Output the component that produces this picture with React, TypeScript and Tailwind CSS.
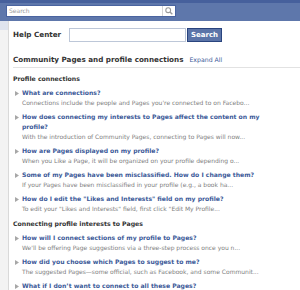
const sections = [
  {
    title: "Profile connections",
    items: [
      {
        q: ["What are connections?"],
        a: "Connections include the people and Pages you're connected to on Facebo...",
      },
      {
        q: ["How does connecting my interests to Pages affect the content on my", "profile?"],
        a: "With the introduction of Community Pages, connecting to Pages will now...",
      },
      {
        q: ["How are Pages displayed on my profile?"],
        a: "When you Like a Page, it will be organized on your profile depending o...",
      },
      {
        q: ["Some of my Pages have been misclassified. How do I change them?"],
        a: "If your Pages have been misclassified in your profile (e.g., a book ha...",
      },
      {
        q: ["How do I edit the \"Likes and Interests\" field on my profile?"],
        a: "To edit your \"Likes and Interests\" field, first click \"Edit My Profile...",
      },
    ],
  },
  {
    title: "Connecting profile interests to Pages",
    items: [
      {
        q: ["How will I connect sections of my profile to Pages?"],
        a: "We'll be offering Page suggestions via a three-step process once you n...",
      },
      {
        q: ["How did you choose which Pages to suggest to me?"],
        a: "The suggested Pages\u2014some official, such as Facebook, and some Communit...",
      },
      {
        q: ["What if I don\u2019t want to connect to all these Pages?"],
        a: "",
      },
    ],
  },
];

function Arrow() {
  return (
    <svg width="4" height="5" viewBox="0 0 4 5" className="mt-[2.5px] shrink-0">
      <path d="M0 0 L4 2.5 L0 5 Z" fill="#a7a7a7" />
    </svg>
  );
}

export default function App() {
  return (
    <div className="w-[300px] h-[290px] overflow-hidden bg-white font-['DejaVu_Sans',sans-serif]">
      {/* top bar */}
      <div className="h-[21px] bg-[#5e77ab] border-t-[3px] border-[#46609c] pt-[2px] pl-[6px]">
        <div className="w-[170px] h-[12px] bg-white border border-[#4a64a0] flex items-center">
          <span className="flex-1 pl-[2px] text-[6px] leading-none text-[#9a9a9a]">Search</span>
          <div className="w-px h-full bg-[#d5d5d5]" />
          <svg width="10" height="10" viewBox="0 0 10 10" className="mx-[1px]">
            <circle cx="4.2" cy="4.2" r="2.4" fill="none" stroke="#9a9a9a" strokeWidth="1.1" />
            <path d="M6 6 L8.3 8.3" stroke="#9a9a9a" strokeWidth="1.4" />
          </svg>
        </div>
      </div>

      <div className="flex h-full">
        {/* left strip */}
        <div className="w-[9px] shrink-0 bg-[#f3f3f3] border-r border-[#d9d9d9]">
          <div className="h-[9px] bg-[#dfe4ee]" />
        </div>

        <div className="flex-1 pl-[4px]">
          {/* help center search */}
          <div className="flex items-center pt-[7px]">
            <span className="w-[56px] text-[7.2px] leading-none font-bold text-[#333333] whitespace-nowrap">
              Help Center
            </span>
            <div className="w-[117px] h-[14px] border border-[#bdc7d8] bg-white" />
            <button className="ml-[1px] h-[14px] px-[3px] bg-[#5b74a8] border border-[#29447e] text-white text-[7px] font-bold leading-none">
              Search
            </button>
          </div>

          {/* page heading */}
          <div className="mt-[12px] flex items-baseline gap-[6px] h-[14px] border-b border-[#e2e2e2]">
            <span className="text-[7.2px] leading-[12px] font-bold text-[#333333] whitespace-nowrap">
              Community Pages and profile connections
            </span>
            <span className="text-[6.2px] leading-[12px] text-[#3b5998] whitespace-nowrap">Expand All</span>
          </div>

          {sections.map((s, i) => (
            <div key={i} className={i === 0 ? "mt-[6px]" : "mt-[5px]"}>
              <div className="text-[6.2px] leading-[10px] font-bold text-[#333333] mb-[2px]">{s.title}</div>
              {s.items.map((it, j) => (
                <div key={j} className="flex gap-[3px] pl-[2px] mt-[4px] first:mt-0">
                  <Arrow />
                  <div className="min-w-0">
                    {it.q.map((line, k) => (
                      <div key={k} className="text-[6.1px] leading-[10px] font-bold text-[#3b5998] whitespace-nowrap">
                        {line}
                      </div>
                    ))}
                    {it.a && (
                      <div className="text-[6px] leading-[10px] text-[#808080] whitespace-nowrap">{it.a}</div>
                    )}
                  </div>
                </div>
              ))}
            </div>
          ))}
        </div>
      </div>
    </div>
  );
}
